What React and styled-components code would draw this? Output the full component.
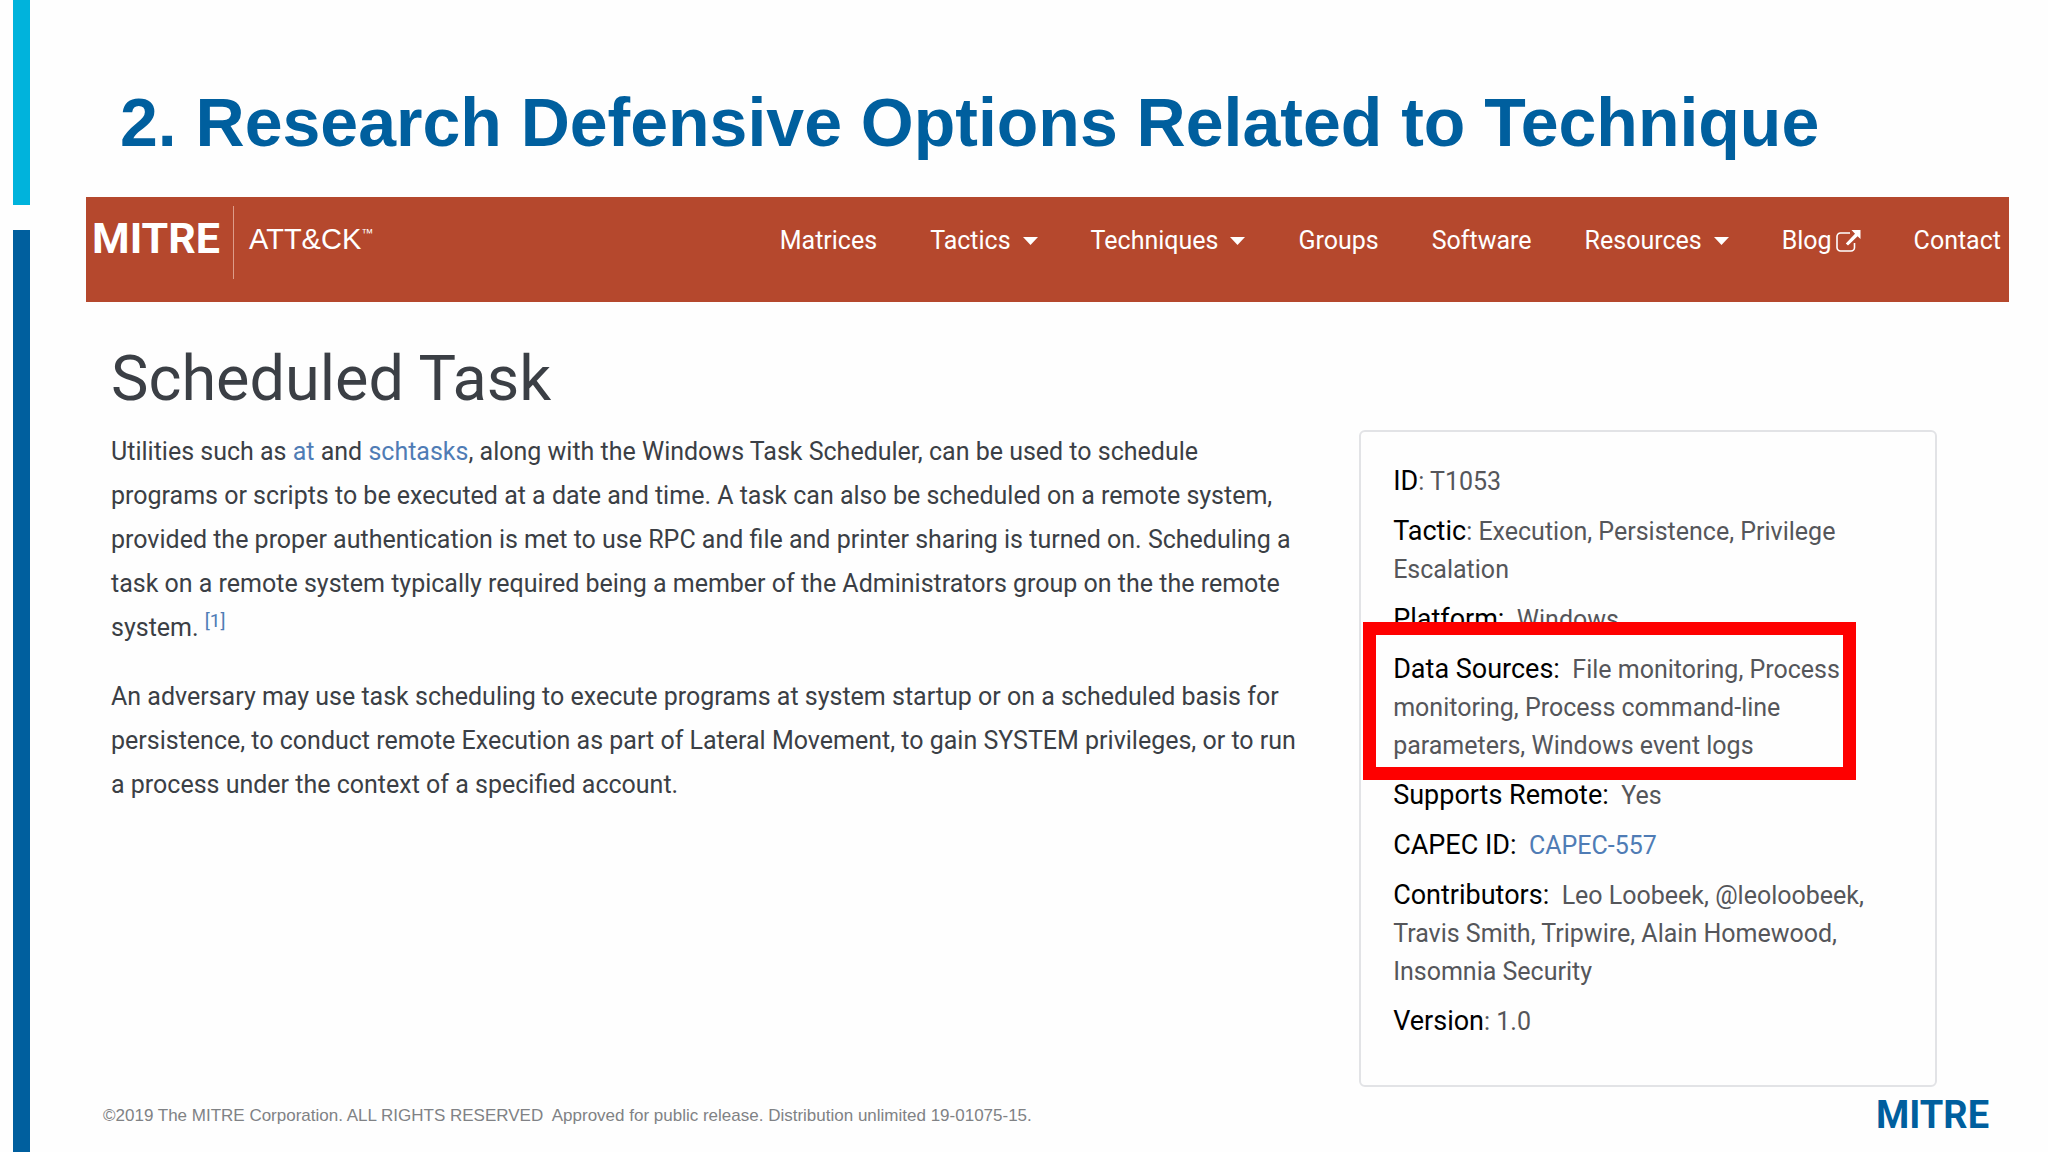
//Basic imports
import React from 'react'
import styled, { createGlobalStyle } from 'styled-components';

//Data
const navItems = [
  { id: 1, text: 'Matrices' },
  { id: 2, text: 'Tactics', menu: true },
  { id: 3, text: 'Techniques', menu: true },
  { id: 4, text: 'Groups' },
  { id: 5, text: 'Software' },
  { id: 6, text: 'Resources', menu: true },
  { id: 7, text: 'Blog', external: true },
  { id: 8, text: 'Contact' },
];

// tightColon: the colon belongs to the value and is not part of the label
const facts = [
  { id: 1, label: 'ID', value: 'T1053', tightColon: true },
  { id: 2, label: 'Tactic', value: 'Execution, Persistence, Privilege Escalation', tightColon: true },
  { id: 3, label: 'Platform', value: 'Windows' },
  {
    id: 4,
    label: 'Data Sources',
    value: 'File monitoring, Process monitoring, Process command-line parameters, Windows event logs',
    marked: true,
  },
  { id: 5, label: 'Supports Remote', value: 'Yes' },
  { id: 6, label: 'CAPEC ID', value: 'CAPEC-557', link: true },
  {
    id: 7,
    label: 'Contributors',
    value: 'Leo Loobeek, @leoloobeek, Travis Smith, Tripwire, Alain Homewood, Insomnia Security',
  },
  { id: 8, label: 'Version', value: '1.0', tightColon: true },
];

const Caret = () => (
  <svg width='15' height='8' viewBox='0 0 15 8' aria-hidden='true'>
    <path d='M0 0h15L7.5 8z' fill='currentColor' />
  </svg>
)

const ExternalIcon = () => (
  <svg width='25' height='22' viewBox='0 0 25 22' aria-hidden='true'>
    <path
      d='M14 3H4.5A3.5 3.5 0 0 0 1 6.5V17.5A3.5 3.5 0 0 0 4.5 21H15A3.5 3.5 0 0 0 18.5 17.5V13'
      fill='none'
      stroke='currentColor'
      strokeWidth='1.6'
    />
    <path d='M15.5 0H24.5V9L21.6 6.2L12 15.5L9.8 13.4L19 3.7z' fill='currentColor' />
  </svg>
)

const Navbar = () => {
  return (
    <NavbarWrapper>
      <Brand href='#'>
        <Logo $size={43}>MITRE</Logo>
        <Product>
          ATT&amp;CK<small>™</small>
        </Product>
      </Brand>
      <NavLinks>
        {navItems.map((item) => {
          const { id, text, menu, external } = item;
          return (
            <li key={id}>
              {menu ? (
                <NavButton type='button'>
                  {text}
                  <Caret />
                </NavButton>
              ) : (
                <NavLink href='#'>
                  {text}
                  {external && <ExternalIcon />}
                </NavLink>
              )}
            </li>
          )
        })}
      </NavLinks>
    </NavbarWrapper>
  )
}

const FactCard = () => {
  return (
    <Card>
      {facts.map((item) => {
        const { id, label, value, tightColon, link, marked } = item;
        return (
          <Fact key={id}>
            <FactLabel>{tightColon ? label : `${label}:`}</FactLabel>
            {tightColon ? ': ' : <>&nbsp; </>}
            {link ? <TextLink href='#'>{value}</TextLink> : value}
            {marked && <Marker />}
          </Fact>
        )
      })}
    </Card>
  )
}

export default function App() {
  return (
    <>
      <GlobalStyle />
      <Slide>
        <Rail>
          <RailTop />
          <RailBottom />
        </Rail>
        <Main>
          <Title>2. Research Defensive Options Related to Technique</Title>
          <Navbar />
          <Article>
            <Heading>Scheduled Task</Heading>
            <Columns>
              <div>
                <Paragraph>
                  Utilities such as <TextLink href='#'>at</TextLink> and{' '}
                  <TextLink href='#'>schtasks</TextLink>, along with the Windows Task Scheduler,
                  can be used to schedule programs or scripts to be executed at a date and time. A
                  task can also be scheduled on a remote system, provided the proper authentication
                  is met to use RPC and file and printer sharing is turned on. Scheduling a task on
                  a remote system typically required being a member of the Administrators group on
                  the the remote system. <Reference><TextLink href='#'>[1]</TextLink></Reference>
                </Paragraph>
                <Paragraph>
                  An adversary may use task scheduling to execute programs at system startup or on
                  a scheduled basis for persistence, to conduct remote Execution as part of Lateral
                  Movement, to gain SYSTEM privileges, or to run a process under the context of a
                  specified account.
                </Paragraph>
              </div>
              <FactCard />
            </Columns>
          </Article>
          <Footer>
            <span>
              ©2019 The MITRE Corporation. ALL RIGHTS RESERVED&nbsp; Approved for public release.
              Distribution unlimited 19-01075-15.
            </span>
            <Logo $size={38} $blue>MITRE</Logo>
          </Footer>
        </Main>
      </Slide>
    </>
  )
}

const GlobalStyle = createGlobalStyle`
  * {
    box-sizing: border-box;
  }

  body {
    margin: 0;
    background: #fefefe;
    font-family: Roboto, sans-serif;
    color: #3b3f45;
  }

  a {
    text-decoration: none;
  }
`

const Slide = styled.div`
  display: flex;
  min-height: 100vh;
`

const Rail = styled.div`
  flex: none;
  width: 17px;
  margin-left: 13px;
  display: flex;
  flex-direction: column;
  gap: 25px;
`

const RailTop = styled.div`
  height: 205px;
  background: #00b3dc;
`

const RailBottom = styled.div`
  flex: 1;
  background: #005f9e;
`

const Main = styled.main`
  flex: 1;
  min-width: 0;
  display: flex;
  flex-direction: column;
  padding: 82px 39px 0 56px;
`

const Title = styled.h1`
  margin: 0 0 35px;
  padding-left: 34px;
  font: bold 68px/80px "Liberation Sans", Arial, sans-serif;
  color: #005f9e;
`

const NavbarWrapper = styled.nav`
  display: flex;
  align-items: flex-start;
  justify-content: space-between;
  padding: 9px 8px 23px 6px;
  background: #b5482d;
  color: #fff;
`

const Brand = styled.a`
  display: flex;
  align-items: flex-start;
  color: inherit;
`

const Logo = styled.span`
  font: bold ${({ $size }) => $size}px/1.5 Roboto, sans-serif;
  color: ${({ $blue }) => ($blue ? '#005f9e' : 'inherit')};
`

const Product = styled.span`
  display: flex;
  height: 73px;
  margin-left: 13px;
  padding-left: 15px;
  border-left: 1px solid #dd9c89;
  font: 29px/66px "Liberation Sans", Arial, sans-serif;

  small {
    font-size: 12px;
    line-height: 54px;
  }
`

const NavLinks = styled.ul`
  display: flex;
  gap: 53px;
  margin: 0;
  padding: 19px 0 0;
  list-style: none;
  font-size: 25px;
  line-height: 32px;
`

const NavLink = styled.a`
  display: flex;
  align-items: center;
  gap: 4px;
  color: inherit;
`

const NavButton = styled.button`
  display: flex;
  align-items: center;
  gap: 12px;
  padding: 0;
  border: none;
  background: transparent;
  color: inherit;
  font: inherit;
  cursor: pointer;
`

const Article = styled.article`
  padding: 39px 72px 0 25px;
`

const Heading = styled.h2`
  margin: 0 0 13px;
  font-size: 63px;
  font-weight: 400;
  line-height: 76px;
`

const Columns = styled.div`
  display: grid;
  grid-template-columns: 27fr 13fr;
  gap: 48px;
  align-items: start;
`

const Paragraph = styled.p`
  margin: 0 0 25px;
  font-size: 25px;
  line-height: 44px;
`

const TextLink = styled.a`
  color: #4f7cb5;
`

const Reference = styled.sup`
  font-size: 19px;
  line-height: 0;
`

const Card = styled.aside`
  padding: 31px 44px 32px 32px;
  border: 2px solid #e2e3e6;
  border-radius: 6px;
  color: #55565a;
  font-size: 25px;
  line-height: 38px;
`

const Fact = styled.div`
  position: relative;
  margin-bottom: 12px;
`

const FactLabel = styled.span`
  color: #000;
  font-size: 27px;
  line-height: 1;
`

// Red frame laid over the fact it points out
const Marker = styled.span`
  position: absolute;
  inset: -29px 35px -15px -30px;
  border: 13px solid #fe0000;
`

const Footer = styled.footer`
  display: flex;
  align-items: center;
  justify-content: space-between;
  padding: 0 20px 0 17px;
  font: 17px/24px "Liberation Sans", Arial, sans-serif;
  color: #808285;
`
